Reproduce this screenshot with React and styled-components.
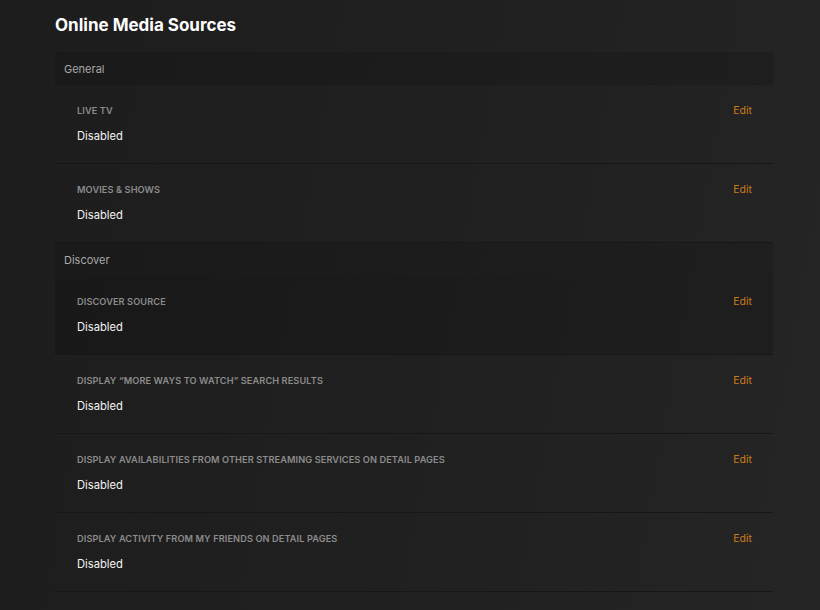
import React from 'react';
import styled, { createGlobalStyle } from 'styled-components';

const GlobalStyle = createGlobalStyle`
  html, body {
    margin: 0;
    padding: 0;
    height: 100%;
  }
  body {
    background: linear-gradient(100deg, #1d1d1d 0%, #202020 50%, #252525 100%);
    font-family: Inter, "Open Sans", "Liberation Sans", sans-serif;
    color: #eee;
    -webkit-font-smoothing: antialiased;
  }
`;

const sections = [
  {
    title: 'General',
    items: [
      { label: 'Live TV', value: 'Disabled' },
      { label: 'Movies & Shows', value: 'Disabled' },
    ],
  },
  {
    title: 'Discover',
    items: [
      { label: 'Discover Source', value: 'Disabled', active: true },
      { label: 'Display \u201cMore Ways to Watch\u201d Search Results', value: 'Disabled' },
      { label: 'Display Availabilities from Other Streaming Services on Detail Pages', value: 'Disabled' },
      { label: 'Display Activity from My Friends on Detail Pages', value: 'Disabled' },
    ],
  },
];

const App = () => {
  return (
    <Page>
      <GlobalStyle />
      <Title>Online Media Sources</Title>
      <List>
        {sections.map((section) => (
          <Section key={section.title}>
            <SectionHeader>{section.title}</SectionHeader>
            {section.items.map((item) => (
              <Row key={item.label} $active={item.active}>
                <RowText>
                  <Label>{item.label}</Label>
                  <Value>{item.value}</Value>
                </RowText>
                <EditLink href="#">Edit</EditLink>
              </Row>
            ))}
          </Section>
        ))}
      </List>
    </Page>
  );
};

const Page = styled.div`
  width: 718px;
  padding: 13px 0 0 55px;
`

const Title = styled.h1`
  margin: 0 0 15px;
  font-size: 17px;
  line-height: 24px;
  font-weight: 700;
  color: #fff;
`

const List = styled.div`
  display: flex;
  flex-direction: column;
`

const Section = styled.div`
  display: flex;
  flex-direction: column;
`

const SectionHeader = styled.div`
  height: 33px;
  display: flex;
  align-items: center;
  padding-left: 9px;
  background: rgba(0, 0, 0, 0.12);
  font-size: 11px;
  color: #a8a8a8;
`

const Row = styled.div`
  display: flex;
  justify-content: space-between;
  align-items: flex-start;
  padding: 19px 21px 18px 22px;
  border-bottom: 1px solid #171717;
  background: ${(p) => (p.$active ? 'rgba(0, 0, 0, 0.14)' : 'transparent')};
`

const RowText = styled.div`
  display: flex;
  flex-direction: column;
  gap: 9px;
`

const Label = styled.div`
  font-size: 9.2px;
  line-height: 14px;
  font-weight: 600;
  text-transform: uppercase;
  letter-spacing: 0.1px;
  color: #8c8c8c;
`

const Value = styled.div`
  font-size: 11.2px;
  line-height: 18px;
  color: #f2f2f2;
`

const EditLink = styled.a`
  font-size: 10.5px;
  line-height: 14px;
  color: #cc7b19;
  text-decoration: none;
`

export default App;
